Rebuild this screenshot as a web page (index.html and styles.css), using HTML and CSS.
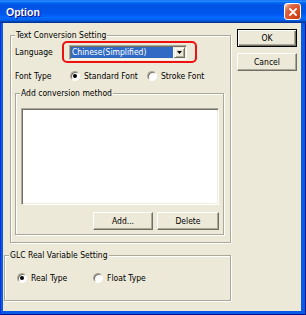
FILE: index.html
```html
<!DOCTYPE html>
<html lang="en">
<head>
    <meta charset="UTF-8">
    <title>Option</title>
    <link rel="stylesheet" href="styles.css">
</head>
<body>
    <div class="window">
        <!-- Заголовок окна -->
        <div class="titlebar">
            <span class="title">Option</span>
            <button class="close" aria-label="Close">
                <svg width="10" height="10" viewBox="0 0 10 10">
                    <path d="M2 2 L8 8 M8 2 L2 8" stroke="#fff" stroke-width="1.8" stroke-linecap="square"/>
                </svg>
            </button>
        </div>

        <div class="client">
            <div class="main">
                <!-- Настройки конвертации текста -->
                <div class="group g-text">
                    <span class="group-title">Text Conversion Setting</span>

                    <div class="row row-lang">
                        <span class="label label-lang">Language</span>
                        <div class="highlight">
                            <div class="combo">
                                <span class="combo-value">Chinese(Simplified)</span>
                                <span class="combo-btn">
                                    <svg width="5" height="3" viewBox="0 0 5 3"><polygon points="0,0 5,0 2.5,3" fill="#000"/></svg>
                                </span>
                            </div>
                        </div>
                    </div>

                    <div class="row row-font">
                        <span class="label label-font">Font Type</span>
                        <label class="radio checked"><span class="radio-dot"></span>Standard Font</label>
                        <label class="radio"><span class="radio-dot"></span>Stroke Font</label>
                    </div>

                    <div class="group g-method">
                        <span class="group-title">Add conversion method</span>
                        <div class="listbox"></div>
                        <div class="btn-row">
                            <button class="btn btn-add">Add...</button>
                            <button class="btn btn-delete">Delete</button>
                        </div>
                    </div>
                </div>

                <!-- Тип вещественных переменных -->
                <div class="group g-glc">
                    <span class="group-title">GLC Real Variable Setting</span>
                    <div class="row row-glc">
                        <label class="radio radio-real checked"><span class="radio-dot"></span>Real Type</label>
                        <label class="radio"><span class="radio-dot"></span>Float Type</label>
                    </div>
                </div>
            </div>

            <div class="side">
                <button class="btn btn-default">OK</button>
                <button class="btn">Cancel</button>
            </div>
        </div>
    </div>
</body>
</html>
```

FILE: styles.css
```css
:root {
    --face: #ece9d8;
    --shadow: #aca899;
    --dark: #716f64;
    --light: #f1efe2;
    --select: #316ac5;
}

* {
    box-sizing: border-box;
    margin: 0;
    padding: 0;
}

body {
    width: 306px;
    height: 315px;
    overflow: hidden;
    font-family: 'DejaVu Sans Condensed', 'Liberation Sans', sans-serif;
    font-size: 8.5px;
    color: #000;
    background: var(--face);
}

button {
    font: inherit;
    color: #000;
}

/* Рамка окна */
.window {
    width: 306px;
    height: 315px;
    display: flex;
    flex-direction: column;
    background: #0a5ae8;
    box-shadow: inset 1px 0 #0831d9, inset -1px -1px #00138c;
}

.titlebar {
    flex: none;
    height: 23px;
    display: flex;
    align-items: center;
    justify-content: space-between;
    padding: 0 5px 0 6px;
    background: linear-gradient(to bottom,
        #0058ee 0%, #3593ff 4%, #288eff 6%, #127dff 8%, #036ffc 10%,
        #0262ee 14%, #0057e5 20%, #0054e3 24%, #0055eb 56%, #005bf5 66%,
        #026afe 76%, #0062ef 86%, #0052d6 92%, #0040ab 94%, #003092 100%);
}

.title {
    color: #fff;
    font-family: 'Liberation Sans', sans-serif;
    font-size: 10.5px;
    font-weight: bold;
    text-shadow: 1px 1px #0f1089;
}

.close {
    width: 17px;
    height: 17px;
    display: flex;
    align-items: center;
    justify-content: center;
    border: 1px solid #fff;
    border-radius: 3px;
    background: radial-gradient(circle at 90% 90%, #c83c10 0%, #e0542a 55%, #d86a48 72%, #f6b39a 90%, #fff 100%);
}

.client {
    flex: 1;
    display: flex;
    margin: 0 5px 4px 3px;
    background: var(--face);
}

.main {
    width: 228px;
    display: flex;
    flex-direction: column;
    align-items: flex-start;
    padding-top: 12px;
}

/* Группы с вдавленной рамкой */
.group {
    display: flex;
    flex-direction: column;
    align-items: flex-start;
    border: 1px solid var(--shadow);
    box-shadow: inset 1px 1px #fff, 1px 1px #fff;
}

.group-title {
    margin: -6px 0 0 4px;
    padding: 0 1px;
    line-height: 10px;
    background: var(--face);
}

.g-text {
    margin-left: 7px;
    width: 221px;
}

.row {
    display: flex;
    align-items: center;
    margin-left: 4px;
}

.row-lang {
    margin-top: 1px;
    height: 22px;
}

.label-lang { width: 47px; }
.label-font { width: 55px; }

.highlight {
    width: 135px;
    height: 22px;
    border: 2px solid #ee1111;
    border-radius: 5px;
    padding: 2px 0 0 5px;
}

.combo {
    width: 118px;
    height: 15px;
    display: flex;
    background: #fff;
    border: 1px solid;
    border-color: var(--shadow) #fff #fff var(--shadow);
    box-shadow: inset 1px 1px var(--dark), inset -1px -1px var(--light);
    padding: 1px;
}

.combo-value {
    width: 103px;
    line-height: 11px;
    padding-left: 1px;
    color: #fff;
    background: var(--select);
}

.combo-btn {
    width: 11px;
    margin-left: 1px;
    display: flex;
    align-items: center;
    justify-content: center;
    background: var(--face);
    border: 1px solid;
    border-color: var(--face) var(--dark) var(--dark) var(--face);
    box-shadow: inset 1px 1px #fff, inset -1px -1px var(--shadow);
}

.row-font {
    margin-top: 5px;
    height: 15px;
}

.radio {
    display: flex;
    align-items: center;
    gap: 4px;
    width: 77px;
}

.radio-dot {
    width: 10px;
    height: 10px;
    flex: none;
    display: flex;
    align-items: center;
    justify-content: center;
    border-radius: 50%;
    background: #fff;
    border: 1px solid;
    border-color: var(--shadow) #fff #fff var(--shadow);
    box-shadow: inset 1px 1px var(--dark);
}

.checked .radio-dot::after {
    content: '';
    width: 4px;
    height: 4px;
    border-radius: 50%;
    background: #000;
}

/* Вложенная группа со списком */
.g-method {
    margin: 10px 0 7px 4px;
    width: 209px;
    padding-bottom: 4px;
}

.listbox {
    margin: 10px 0 0 5px;
    width: 198px;
    height: 97px;
    background: #fff;
    border: 1px solid;
    border-color: var(--shadow) #fff #fff var(--shadow);
    box-shadow: inset 1px 1px var(--dark), inset -1px -1px var(--light);
}

.btn-row {
    margin: 7px 0 0 5px;
    width: 198px;
    display: flex;
    justify-content: flex-end;
    gap: 4px;
}

.btn {
    height: 18px;
    background: var(--face);
    border: 1px solid;
    border-color: #fff var(--dark) var(--dark) #fff;
    box-shadow: inset -1px -1px var(--shadow);
}

.btn-add { width: 60px; }
.btn-delete { width: 62px; }

.g-glc {
    margin: 12px 0 0 1px;
    width: 227px;
    padding-bottom: 16px;
}

.row-glc {
    margin: 12px 0 0 12px;
    height: 12px;
}

.radio-real { width: 76px; }

/* Кнопки справа */
.side {
    margin-left: 6px;
    padding-top: 6px;
    display: flex;
    flex-direction: column;
    gap: 6px;
}

.side .btn { width: 60px; }

.btn-default {
    border-color: #000;
    box-shadow: inset 1px 1px #fff, inset -1px -1px var(--dark), inset -2px -2px var(--shadow);
}
```
